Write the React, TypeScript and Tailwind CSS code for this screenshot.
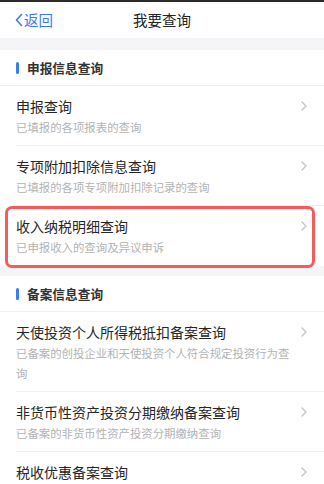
import React from 'react';

const font = { fontFamily: '"Noto Sans CJK SC", "Noto Sans", sans-serif' };

type Item = { title: string; desc: string; marked?: boolean };

const sections: { name: string; items: Item[] }[] = [
  {
    name: '申报信息查询',
    items: [
      { title: '申报查询', desc: '已填报的各项报表的查询' },
      { title: '专项附加扣除信息查询', desc: '已填报的各项专项附加扣除记录的查询' },
      { title: '收入纳税明细查询', desc: '已申报收入的查询及异议申诉', marked: true },
    ],
  },
  {
    name: '备案信息查询',
    items: [
      { title: '天使投资个人所得税抵扣备案查询', desc: '已备案的创投企业和天使投资个人符合规定投资行为查询' },
      { title: '非货币性资产投资分期缴纳备案查询', desc: '已备案的非货币性资产投资分期缴纳查询' },
      { title: '税收优惠备案查询', desc: '已备案的税收优惠事项查询' },
    ],
  },
];

function Chevron() {
  return (
    <svg width="8" height="12" viewBox="0 0 8 12" className="shrink-0 mt-[5px]">
      <path d="M2 2l4 4-4 4" fill="none" stroke="#c6c6c6" strokeWidth="1.4" strokeLinecap="round" strokeLinejoin="round" />
    </svg>
  );
}

function Row({ item, last }: { item: Item; last: boolean }) {
  return (
    <div className="relative pl-4 py-[9px]">
      <div className="flex items-start pr-[16px] gap-[2px]">
        <div className="flex-1">
          <div className="text-[14px] leading-[22px] text-[#262626]">{item.title}</div>
          <div className="text-[11.4px] leading-[20px] text-[#b3b3b3]">{item.desc}</div>
        </div>
        <Chevron />
      </div>
      {!last && <div className="absolute left-4 right-0 bottom-0 h-px bg-[#efefef]" />}
      {item.marked && (
        <div className="absolute left-[5px] right-[9px] top-0 bottom-[-2px] border-[3px] border-[#f25c5c] rounded-[7px]" />
      )}
    </div>
  );
}

export default function App() {
  return (
    <div className="w-[324px] h-[484px] overflow-hidden bg-[#f5f5f7]" style={font}>
      <div className="h-[2px] bg-[#2b2b2b]" />
      <div className="relative h-[36px] bg-white flex items-center justify-center">
        <div className="absolute left-[15px] top-0 h-full flex items-center text-[#3b7cf0] text-[14.5px]">
          <svg width="8" height="14" viewBox="0 0 8 14" className="mr-[1px]">
            <path d="M6.5 1.5L1.5 7l5 5.5" fill="none" stroke="#3b7cf0" strokeWidth="1.6" strokeLinecap="round" strokeLinejoin="round" />
          </svg>
          返回
        </div>
        <div className="text-[14.5px] text-[#222]">我要查询</div>
      </div>

      {sections.map((s, si) => (
        <div key={si} className={si === 0 ? 'mt-[12px]' : 'mt-[10px]'}>
          <div className="bg-white">
            <div className="h-[36px] flex items-center pl-4 border-b border-[#efefef]">
              <div className="w-[3px] h-[12px] rounded-full bg-[#3b7cf0] mr-[8px]" />
              <span className="text-[12.7px] font-bold text-[#333]">{s.name}</span>
            </div>
            {s.items.map((it, i) => (
              <Row key={i} item={it} last={i === s.items.length - 1} />
            ))}
          </div>
        </div>
      ))}
    </div>
  );
}
